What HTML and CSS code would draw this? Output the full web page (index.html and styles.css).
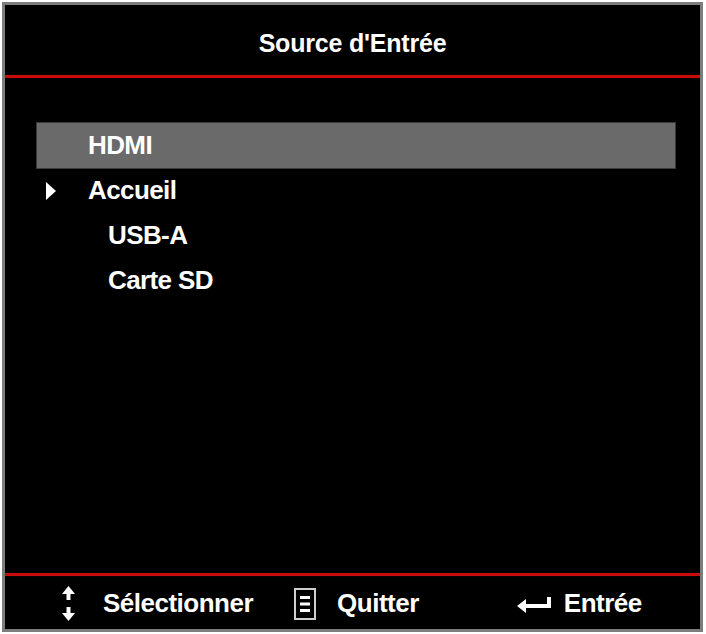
FILE: index.html
```html
<!DOCTYPE html>
<html lang="fr">
<head>
    <meta charset="UTF-8">
    <meta name="viewport" content="width=device-width, initial-scale=1.0">
    <title>Source d'Entrée</title>
    <link rel="stylesheet" href="styles.css">
</head>
<body>
    <div class="osd">
        <div class="osd-header">
            <h1>Source d'Entrée</h1>
        </div>
        <div class="rule"></div>

        <div class="osd-body">
            <div class="item selected">HDMI</div>
            <div class="item">
                <svg class="caret" width="10" height="18" viewBox="0 0 10 18">
                    <path d="M0 0 L10 9 L0 18 Z" fill="#fff"/>
                </svg>
                Accueil
            </div>
            <div class="item sub">USB-A</div>
            <div class="item sub">Carte SD</div>
        </div>

        <div class="rule"></div>
        <div class="osd-footer">
            <div class="hint hint-select">
                <svg class="icon" width="13" height="36" viewBox="0 0 13 36">
                    <!-- haut -->
                    <path d="M6.5 0 L13 8 L8.5 8 L8.5 14 L4.5 14 L4.5 8 L0 8 Z" fill="#fff"/>
                    <!-- bas -->
                    <path d="M4.5 21 L8.5 21 L8.5 27 L13 27 L6.5 35 L0 27 L4.5 27 Z" fill="#fff"/>
                </svg>
                <span>Sélectionner</span>
            </div>
            <div class="hint hint-menu">
                <svg class="icon" width="22" height="32" viewBox="0 0 22 32">
                    <rect x="1" y="1" width="20" height="30" fill="none" stroke="#cfcfcf" stroke-width="2"/>
                    <rect x="6" y="8" width="10" height="3" fill="#fff"/>
                    <rect x="6" y="14.5" width="10" height="3" fill="#fff"/>
                    <rect x="6" y="21" width="10" height="3" fill="#fff"/>
                </svg>
                <span>Quitter</span>
            </div>
            <div class="hint hint-enter">
                <svg class="icon" width="35" height="18" viewBox="0 0 35 18">
                    <path d="M0 11 L9 4 L9 9 L30 9 L30 2 L34 2 L34 13 L9 13 L9 18 Z" fill="#fff"/>
                </svg>
                <span>Entrée</span>
            </div>
        </div>
    </div>
</body>
</html>
```

FILE: styles.css
```css
* {
    margin: 0;
    padding: 0;
    box-sizing: border-box;
}

body {
    margin: 2px;
    background: #fff;
    font-family: 'Liberation Sans', Arial, sans-serif;
    color: #fff;
}

.osd {
    width: 701px;
    height: 630px;
    border: 3px solid #7d7d7d;
    background: #000;
    display: flex;
    flex-direction: column;
}

.osd-header {
    height: 70px;
    display: flex;
    align-items: center;
    justify-content: center;
    padding-top: 6px;
}

.osd-header h1 {
    font-size: 25px;
    font-weight: bold;
    letter-spacing: -0.2px;
}

.rule {
    height: 3px;
    background: #c80c0c;
    box-shadow: 0 0 1px #600;
}

.osd-body {
    flex: 1;
    padding: 45px 25px 0 32px;
}

.item {
    height: 45px;
    display: flex;
    align-items: center;
    position: relative;
    padding-left: 51px;
    font-size: 26px;
    font-weight: bold;
    letter-spacing: -0.6px;
}

.item.selected {
    background: #6a6a6a;
    outline: 1px solid #3a3a3a;
}

.item.sub {
    padding-left: 71px;
}

.caret {
    position: absolute;
    left: 9px;
    top: 14px;
}

.osd-footer {
    height: 53px;
    display: flex;
    align-items: center;
    padding-left: 57px;
    padding-top: 2px;
}

.hint {
    display: flex;
    align-items: center;
    font-size: 26px;
    font-weight: bold;
    letter-spacing: -0.5px;
}

.hint-select .icon {
    margin-right: 28px;
}

.hint-menu {
    margin-left: 41px;
}

.hint-menu .icon {
    margin-right: 21px;
}

.hint-enter {
    margin-left: 98px;
}

.hint-enter .icon {
    margin-right: 12px;
}
```
